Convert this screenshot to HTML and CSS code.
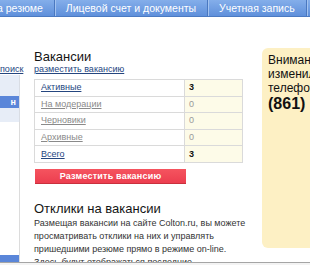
FILE: index.html
```html
<!DOCTYPE html>
<html lang="ru">
<head>
<meta charset="utf-8">
<link rel="stylesheet" href="styles.css">
</head>
<body>
<div class="nav">
  <div class="nav-item first">а резюме</div>
  <div class="nav-item">Лицевой счет и документы</div>
  <div class="nav-item">Учетная запись</div>
  <div class="nav-item">Помощь</div>
</div>
<div class="layout">
  <aside class="side">
    <a class="side-link" href="#">поиск</a>
    <div class="side-panel"><div class="side-btn">н</div></div>
    <div class="side-rest"><div class="side-btn low"></div></div>
  </aside>
  <main class="main">
    <h2 class="title">Вакансии</h2>
    <a class="add-link" href="#">разместить вакансию</a>
    <table class="stats">
      <tr><td class="name"><a class="lnk" href="#">Активные</a></td><td class="val strong">3</td></tr>
      <tr><td class="name"><a class="lnk muted" href="#">На модерации</a></td><td class="val">0</td></tr>
      <tr><td class="name"><a class="lnk muted" href="#">Черновики</a></td><td class="val">0</td></tr>
      <tr><td class="name"><a class="lnk muted" href="#">Архивные</a></td><td class="val">0</td></tr>
      <tr><td class="name"><a class="lnk" href="#">Всего</a></td><td class="val strong">3</td></tr>
    </table>
    <div class="red-btn">Разместить вакансию</div>
    <h2 class="title title2">Отклики на вакансии</h2>
    <p class="text">Размещая вакансии на сайте Colton.ru, вы можете просматривать отклики на них и управлять пришедшими резюме прямо в режиме on-line. Здесь будут отображаться последние объявления.</p>
  </main>
  <div class="notice">
    <div class="notice-line">Внимание!</div>
    <div class="notice-line">изменились</div>
    <div class="notice-line">телефоны:</div>
    <div class="notice-phone">(861)</div>
  </div>
</div>
<div class="statusbar"></div>
</body>
</html>
```
FILE: styles.css
```css
html, body {
  margin: 0;
  padding: 0;
}
body {
  width: 310px;
  height: 265px;
  overflow: hidden;
  background: #fff;
  font-family: "Liberation Sans", Arial, sans-serif;
  color: #333;
}
.nav {
  display: flex;
  height: 16px;
  background: linear-gradient(#84aeea, #5f90db);
  border-bottom: 1px solid #4b7ac2;
}
.nav-item {
  color: #fff;
  font-size: 10.5px;
  line-height: 16px;
  padding: 0 11px;
  white-space: nowrap;
  border-right: 1px solid #4a78c0;
  box-shadow: 1px 0 0 #a3c3f0;
  flex-shrink: 0;
}
.nav-item.first {
  padding-left: 0;
  margin-left: -3px;
}
.layout {
  display: flex;
  align-items: flex-start;
}
.side {
  width: 20px;
  flex-shrink: 0;
  padding-top: 47px;
}
.side-link {
  display: block;
  font-size: 9px;
  line-height: 11px;
  color: #25467f;
  text-align: right;
  white-space: nowrap;
  margin-right: -2px;
}
.side-panel {
  height: 47px;
  background: #e7edf7;
  border-right: 1px solid #d9dde4;
  padding-top: 21px;
  box-sizing: border-box;
}
.side-btn {
  height: 12px;
  background: #5a86d9;
  color: #fff;
  font-size: 9px;
  line-height: 12px;
  font-weight: bold;
  text-align: right;
  padding-right: 3px;
}
.side-rest {
  height: 143px;
  box-sizing: border-box;
  padding-top: 133px;
  border-right: 1px solid #dcdcdc;
}
.main {
  width: 210px;
  flex-shrink: 0;
  margin-left: 14px;
  padding-top: 32px;
}
.title {
  margin: 0;
  font-size: 13px;
  line-height: 15px;
  font-weight: normal;
  color: #151515;
}
.title2 {
  margin-top: 17px;
  line-height: 16px;
}
.add-link {
  display: block;
  font-size: 9px;
  line-height: 11px;
  color: #25467f;
}
.stats {
  margin-top: 4px;
  width: 209px;
  border-collapse: collapse;
  border: 1px solid #dadada;
}
.stats td {
  border: 1px solid #dadada;
  height: 15.6px;
  padding: 0 6px;
  font-size: 9px;
  line-height: 11px;
}
.stats td.name {
  width: 137px;
  background: #fff;
}
.stats td.val {
  background: #fdfbe8;
  color: #999;
  padding-left: 4px;
}
.stats td.val.strong {
  color: #111;
  font-weight: bold;
}
.lnk {
  color: #25467f;
}
.lnk.muted {
  color: #8a8a8a;
}
.red-btn {
  margin-top: 6px;
  margin-left: 1px;
  width: 151px;
  height: 15px;
  box-sizing: border-box;
  background: linear-gradient(#f5545f, #ec3e4f);
  border-bottom: 1px solid #c9303d;
  color: #fff;
  font-size: 9px;
  font-weight: bold;
  line-height: 15px;
  text-align: center;
  letter-spacing: 0.2px;
}
.text {
  margin: 0;
  font-size: 9px;
  line-height: 13px;
  color: #333;
  width: 212px;
}
.notice {
  flex-shrink: 0;
  margin-left: 18px;
  margin-top: 31px;
  width: 130px;
  height: 200px;
  box-sizing: border-box;
  padding: 5px 6px;
  background: #fdf0c4;
  border-radius: 6px;
  color: #111;
}
.notice-line {
  font-size: 12px;
  line-height: 14px;
}
.notice-phone {
  font-size: 16px;
  line-height: 18px;
  font-weight: bold;
}
.statusbar {
  position: fixed;
  left: 0;
  right: 0;
  bottom: 0;
  height: 2px;
  background: #f3f3f3;
  border-top: 1px solid #a5a5a5;
}
```
